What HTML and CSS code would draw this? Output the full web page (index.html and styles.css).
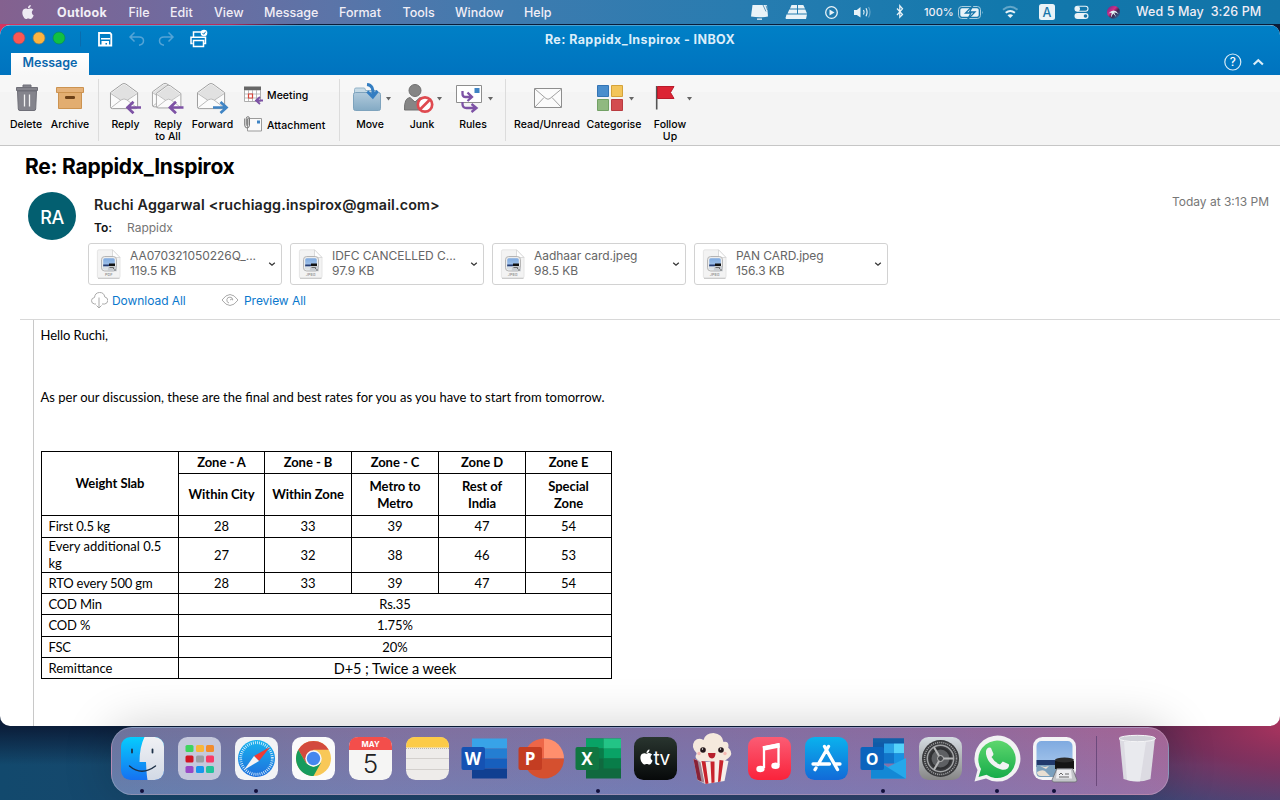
FILE: index.html
```html
<!DOCTYPE html>
<html lang="en">
<head>
<meta charset="utf-8">
<title>Re: Rappidx_Inspirox - INBOX</title>
<link rel="stylesheet" href="styles.css">
</head>
<body>
<svg width="0" height="0" class="defs">
  <defs>
    <symbol id="apple" viewBox="0 0 24 24"><path d="M12.152 6.896c-.948 0-2.415-1.078-3.96-1.04-2.04.027-3.91 1.183-4.961 3.014-2.117 3.675-.546 9.103 1.519 12.09 1.013 1.454 2.208 3.09 3.792 3.039 1.52-.065 2.09-.987 3.935-.987 1.831 0 2.35.987 3.96.948 1.637-.026 2.676-1.48 3.676-2.948 1.156-1.688 1.636-3.325 1.662-3.415-.039-.013-3.182-1.221-3.22-4.857-.026-3.04 2.48-4.494 2.597-4.559-1.429-2.09-3.623-2.324-4.39-2.376-2-.156-3.675 1.09-4.61 1.09zM15.53 3.83c.843-1.012 1.4-2.427 1.245-3.83-1.207.052-2.662.805-3.532 1.818-.78.896-1.454 2.338-1.273 3.714 1.338.104 2.715-.688 3.559-1.701"/></symbol>
    <linearGradient id="sea" x1="0" y1="0" x2="0" y2="1"><stop offset="0" stop-color="#7faae0"/><stop offset="1" stop-color="#b4d0ef"/></linearGradient>
    <symbol id="open-env" viewBox="0 0 32 32">
      <path d="M1 12 13 3.2Q15 2 17 3.2L29 12V26.500Q29 28.500 27 28.500H3Q1 28.500 1 26.500Z" fill="#fbfbfb" stroke="#9a9a9a" stroke-width="1"/>
      <path d="M2 12.500 13.300 4.200Q15 3 16.700 4.200L28 12.500 18.500 19.500Q15 17.300 11.500 19.500Z" fill="#e1e1e1"/>
      <path d="M1.500 13 11.500 19.800M28.500 13 18.500 19.800M1.800 27.500 12 19.500Q15 17.500 18 19.500L28.200 27.500" fill="none" stroke="#b0b0b0" stroke-width=".9"/>
    </symbol>
    <symbol id="arrow-left" viewBox="0 0 16 14"><path d="M15.500 7H3M8 1.300 2 7l6 5.700" fill="none" stroke="#7d52a5" stroke-width="2.700"/></symbol>
    <symbol id="file" viewBox="0 0 26 30">
      <path d="M3 .8H16.500L24 8.500V27.500Q24 29.200 22.400 29.200H3Q1.400 29.200 1.400 27.500V2.400Q1.400.8 3 .8Z" fill="#f3f3f3" stroke="#e0e0e0" stroke-width=".8"/>
      <path d="M2 29.300H23.500" stroke="#c4c4c4" stroke-width="1"/>
      <path d="M16.500.8V7Q16.500 8.500 18 8.500H24Z" fill="#fff" stroke="#d3d3d3" stroke-width=".8"/>
      <rect x="5.500" y="7.500" width="15" height="14.500" rx="3.200" fill="#ededed" stroke="#b5b5b5"/>
      <rect x="7.200" y="9.200" width="11.600" height="11" rx="1.500" fill="url(#sea)"/>
      <path d="M7.200 15.500h11.600v2H7.200z" fill="#263c72"/><path d="M7.200 17.500h11.600v2.700H7.200z" fill="#dce1e5"/>
      <path d="M13 14.500h6v2.500h-6z" fill="#111"/><path d="M12.500 17h7.500l1 5.200h-9.500z" fill="#c7cbd0"/><path d="M13.500 18.500h4v1.500M18 21h2" stroke="#555" fill="none" stroke-width=".8"/>
    </symbol>
    <symbol id="chev" viewBox="0 0 8 6"><path d="M1.200 1.700 4 4.300 6.800 1.700" fill="none" stroke="#333" stroke-width="1.200"/></symbol>
  </defs>
</svg>

<header class="menubar">
  <nav class="menus">
    <span class="apple"><svg width="14" height="16"><use href="#apple" width="14" height="16" fill="#eeeaf3"/></svg></span>
    <b class="m-app">Outlook</b><span>File</span><span>Edit</span><span>View</span><span>Message</span><span>Format</span><span>Tools</span><span>Window</span><span>Help</span>
  </nav>
  <div class="status">
    <svg viewBox="740 0 40 24"><path d="M752.500 5H767L768 16.500Q760 18 751 16.500Z" fill="#e9f3f8"/><path d="M763 5 766 11.500M766 5.500 767.500 10" stroke="#377ea8" stroke-width=".8"/><path d="M757 18.500h5v1.300h-5z" fill="#e9f3f8"/></svg>
    <svg viewBox="780 0 35 24" fill="#e9f3f8"><path d="M791.500 5H797v3.500H790zM798 5H803.300L805 8.500H798zM789.300 9.500H797v4H787.500zM798 9.500H805.300L807 13.500H798zM786.500 14.500H807L806 19H786L785.500 18z"/></svg>
    <svg viewBox="815 0 35 24"><circle cx="831.500" cy="12.500" r="5.800" fill="none" stroke="#e9f3f8" stroke-width="1.300"/><path d="M829.500 9.500v6l5-3z" fill="#e9f3f8"/></svg>
    <svg viewBox="850 0 35 24"><path d="M855 10h2.800L861.500 7v10.500L857.800 15H855Z" fill="#e9f3f8" transform="translate(-1)"/><path d="M863.500 10q1.300 2.300 0 4.500M866 8.300q2.200 4 0 8" fill="none" stroke="#e9f3f8" stroke-width="1.200"/><path d="M868.500 7q3 5 0 10.500" fill="none" stroke="#65a5c9" stroke-width="1.200"/></svg>
    <svg viewBox="885 0 30 24"><path d="M891.500 8.200 897 14.200 894.300 17V5.300L897 8.500 891.500 14.700" fill="none" stroke="#e9f3f8" stroke-width="1.250" transform="translate(5.500 .3)"/></svg>
    <span class="pct">100%</span>
    <svg viewBox="953 0 37 24"><rect x="958.500" y="6.500" width="22" height="12" rx="3.200" fill="none" stroke="#a8cde0"/><rect x="960.300" y="8.200" width="18.400" height="8.600" rx="1.700" fill="#e9f3f8"/><path d="M973 5.500 965.500 13H971L967.500 19.500 975 12H969.500Z" fill="#e9f3f8" stroke="#1776a9" stroke-width="1.300"/><path d="M982 10.700q1.300 1.500 0 3.500z" fill="#a8cde0"/></svg>
    <svg viewBox="990 0 40 24"><path d="M1003.500 9.800q7.250-6 14.500 0" fill="none" stroke="#62a7ca" stroke-width="1.900" transform="translate(-.5)"/><path d="M1005.700 12.800q4.600-3.600 9.200 0" fill="none" stroke="#e9f3f8" stroke-width="2"/><path d="M1007.500 15.200q2.800-2 5.600 0L1010.300 18z" fill="#e9f3f8"/></svg>
    <svg viewBox="1030 0 32 24"><rect x="1039" y="4" width="16" height="16" rx="2.500" fill="#e9f3f8"/><text x="1047" y="16.700" text-anchor="middle" font-size="12.500" fill="#1776a9" class="svgt">A</text></svg>
    <svg viewBox="1062 0 36 24"><rect x="1075" y="6.300" width="13" height="5" rx="2.500" fill="none" stroke="#e9f3f8" stroke-width="1.100"/><circle cx="1077.500" cy="8.800" r="2.500" fill="#e9f3f8"/><rect x="1074.500" y="13" width="14" height="6" rx="3" fill="#e9f3f8"/><circle cx="1085.500" cy="16" r="1.800" fill="#1776a9"/></svg>
    <svg viewBox="1098 0 32 24"><defs><linearGradient id="siri" x1="0" y1="0" x2="1" y2="1"><stop offset="0" stop-color="#5a2a8a"/><stop offset=".4" stop-color="#d02e86"/><stop offset=".6" stop-color="#3c2550"/><stop offset="1" stop-color="#2b83b5"/></linearGradient></defs><circle cx="1113.500" cy="12.200" r="6.500" fill="url(#siri)"/><path d="M1108.500 13.500q5.500-6 10 .5-3-2-4.300-1.500l2 4.500-3-3.500-2.500 4.500 1-5q-1-.5-3.200.5z" fill="#dff3f5"/></svg>
    <span class="date">Wed 5 May&nbsp; 3:26 PM</span>
  </div>
</header>

<main class="window">
  <div class="titlebar">
    <div class="quick">
      <svg viewBox="0 25 220 27" width="220" height="27">
        <g stroke-width=".7"><circle cx="19" cy="38" r="6" fill="#fc5753" stroke="#8f5069"/><circle cx="39" cy="38" r="6" fill="#fdb440" stroke="#8c7f55"/><circle cx="59" cy="38" r="6" fill="#11c044" stroke="#0c8a55"/></g>
        <path d="M80.500 31.500v15" stroke="#0a6cad"/>
        <path d="M99 33h11l1.300 1.300V45.500H99z" fill="none" stroke="#fff" stroke-width="1.800"/><path d="M101 38.800h9" stroke="#fff" stroke-width="1.500"/><path d="M101.500 45.500v-4.500h7.500v4.500h-2v-2.500h-1.500v2.500z" fill="#fff"/>
        <g fill="none" stroke="#54a4d6" stroke-width="1.500"><path d="M134.500 32.500 130 37l4.500 4.500M130.300 37H139q4.500 0 4.500 3.800T139 45.300"/><path d="M168.500 32.500 173 37l-4.500 4.500M172.700 37H164q-4.500 0-4.500 3.800t4.500 4.500"/></g>
        <path d="M193.500 36.500V32h7.500M192.500 43.500H191V37.200H205.500V43.500H204M193.500 40.500H203.500V46.500H193.500Z" fill="none" stroke="#fff" stroke-width="1.500"/><circle cx="204" cy="33" r="3.300" fill="#fff"/><path d="m202.500 33 1.200 1.300 2-2.600" stroke="#0878be" fill="none"/>
      </svg>
      <span class="wintitle">Re: Rappidx_Inspirox - INBOX</span>
    </div>
    <div class="tabs">
      <span class="tab">Message</span>
      <svg viewBox="1220 52 50 22" width="50" height="22"><circle cx="1232.800" cy="62" r="8" fill="none" stroke="#d5eaf6" stroke-width="1.200"/><text x="1232.800" y="66.200" text-anchor="middle" font-size="11.500" fill="#fff" class="svgt">?</text><path d="m1253.700 64.500 4.600-4.200 4.600 4.200" fill="none" stroke="#d9ecf7" stroke-width="2.200"/></svg>
    </div>
  </div>

  <div class="ribbon">
    <div class="btn"><svg viewBox="4 78 44 40"><path d="M17.500 91H36.500L35.700 109Q35.600 110.500 34 110.500H20Q18.400 110.500 18.300 109Z" fill="#84848c" stroke="#6f6f78"/><path d="M16.500 87.500h21v3h-21zM23 87.500v-2.500h8v2.500" fill="#84848c" stroke="#6f6f78"/><path d="M24.500 94.500v12M29.500 94.500v12" stroke="#f2f2f2" stroke-width="1.300"/></svg><span>Delete</span></div>
    <div class="btn"><svg viewBox="48 78 44 40"><path d="M58.500 92.500H81.500V108.500H58.500Z" fill="#e2ad70" stroke="#cc9350"/><path d="M56.500 87.500h27v5h-27z" fill="#e5b27a" stroke="#cc9350"/><rect x="65" y="96" width="10" height="3" rx="1.300" fill="#6d4017"/></svg><span>Archive</span></div>
    <i class="sep"></i>
    <div class="btn"><svg viewBox="104 78 43 40"><use href="#open-env" x="109.500" y="81" width="31" height="31"/><use href="#arrow-left" x="125.500" y="100.500" width="16" height="14"/></svg><span>Reply</span></div>
    <div class="btn"><svg viewBox="147 78 42 40"><use href="#open-env" x="151.500" y="81" width="29" height="29"/><use href="#open-env" x="155.500" y="83" width="28" height="28"/><use href="#arrow-left" x="168" y="100.500" width="16" height="14"/></svg><span>Reply<br>to All</span></div>
    <div class="btn"><svg viewBox="189 78 47 40"><use href="#open-env" x="196.500" y="81" width="31" height="31"/><path d="M213 107.500h12.500M220.500 102l6 5.500-6 5.500" fill="none" stroke="#3f84c4" stroke-width="2.700"/></svg><span>Forward</span></div>
    <div class="stack">
      <div class="row"><svg viewBox="243 85 22 21" width="22" height="21"><path d="M244.500 90h16v11.500h-16z" fill="#fff" stroke="#999" stroke-width=".8"/><path d="M248.500 90v11.500M252.500 90v11.500M256.500 90v11.500M244.500 94h16M244.500 98h16" stroke="#aaa" stroke-width=".8"/><path d="M244 86.500h17V90h-17z" fill="#666"/><path d="M248.500 94h4v4h-4z" fill="#fff" stroke="#d5443a" stroke-width="1.200"/><path d="M263 100.500h-7M260 97l-4 3.500 4 3.500" fill="none" stroke="#7d52a5" stroke-width="1.800"/></svg><span>Meeting</span></div>
      <div class="row"><svg viewBox="243 114 22 21" width="22" height="21"><path d="M247.500 118.500h14v12.500h-14z" fill="#fafafa" stroke="#9b9b9b"/><path d="M257 120.500h3v3h-3z" fill="#3f84c4"/><path d="M244.700 118.500v6.500q.2 3 2.400 3t2.400-3v-6.500q0-1.800-1.600-1.800t-1.600 1.800v6q0 1 .8 1t.8-1v-5.500" fill="none" stroke="#777" stroke-width="1"/></svg><span>Attachment</span></div>
    </div>
    <i class="sep"></i>
    <div class="btn"><svg viewBox="345 78 50 40"><defs><linearGradient id="fold" x1="0" y1="0" x2="0" y2="1"><stop offset="0" stop-color="#b1cadc"/><stop offset="1" stop-color="#83aac4"/></linearGradient></defs><path d="M354.500 93V89.500Q354.500 88 356 88H364Q365.500 88 365.500 90.500H377V95H354.500Z" fill="#c6dae6" stroke="#93b3c8"/><rect x="353.500" y="92.500" width="27" height="18" rx="2" fill="url(#fold)" stroke="#7ea3bd"/><path d="M367 84.500q7 .5 6 11M367.300 91.500l5.500 5.500 4.800-6" fill="none" stroke="#347ec2" stroke-width="3"/><path d="M386 97h5l-2.500 3.500z" fill="#666"/></svg><span>Move</span></div>
    <div class="btn"><svg viewBox="395 78 54 40"><circle cx="415" cy="90.500" r="6" fill="#858585" stroke="#707070"/><path d="M404.500 110Q404 98 410 97.500l5 4.500 5-4.500q4 1 5 6V110Z" fill="#858585" stroke="#707070"/><circle cx="425" cy="104.500" r="7.200" fill="#fff" stroke="#df4a50" stroke-width="2.700"/><path d="m420 109.500 10-10" stroke="#df4a50" stroke-width="2.700"/><path d="M437 97h5l-2.500 3.500z" fill="#666"/></svg><span>Junk</span></div>
    <div class="btn"><svg viewBox="449 78 48 40"><path d="M456.500 85.500h25V102.500h-25z" fill="#fff" stroke="#8e8e8e"/><path d="M474.500 88h5v5h-5z" fill="#3f84c4"/><path d="M462.500 91v3q0 3 3 3h5M462.500 102v2q0 4 4 4h9M467.500 92.500l4.500 4.500-4.500 4M471.500 104l5 4-5 4" fill="none" stroke="#7d52a5" stroke-width="2.300"/><path d="M488 97h5l-2.500 3.500z" fill="#666"/></svg><span>Rules</span></div>
    <i class="sep"></i>
    <div class="btn"><svg viewBox="513 78 68 40"><path d="M534.500 88.500h27v19h-27z" fill="#fbfbfb" stroke="#8e8e8e"/><path d="m535 89 11 9.500q2 1.500 4 0L561.500 89M535 107l9-9.500M561 107l-9-9.500" fill="none" stroke="#a2a2a2"/></svg><span>Read/Unread</span></div>
    <div class="btn"><svg viewBox="581 78 66 40"><path d="M597.500 85.500h11v11h-11z" fill="#4a8ecd" stroke="#3474b4"/><path d="M611.500 85.500h11v11h-11z" fill="#f3c55b" stroke="#d5a33a"/><path d="M597.500 99.500h11v11h-11z" fill="#90b980" stroke="#72a165"/><path d="M611.500 99.500h11v11h-11z" fill="#d34c50" stroke="#b93b40"/><path d="M629 97h5l-2.500 3.500z" fill="#666"/></svg><span>Categorise</span></div>
    <div class="btn"><svg viewBox="647 78 46 40"><path d="M656.700 86v23.500" stroke="#555" stroke-width="1.600"/><path d="M657.500 86.500H674L670.500 92.500 674 98.500H657.500Z" fill="#dc2434" stroke="#b91b2b"/><path d="M687 97h5l-2.500 3.500z" fill="#666"/></svg><span>Follow<br>Up</span></div>
  </div>

  <section class="head">
    <h1>Re: Rappidx_Inspirox</h1>
    <div class="sender">
      <div class="avatar">RA</div>
      <div class="who">
        <div class="from"><strong>Ruchi Aggarwal &lt;ruchiagg.inspirox@gmail.com&gt;</strong><time>Today at 3:13 PM</time></div>
        <div class="to"><b>To:</b><span>Rappidx</span></div>
      </div>
    </div>
    <div class="files">
      <div class="file"><svg class="fi" viewBox="0 0 26 30"><use href="#file" width="26" height="30"/><text x="12.700" y="27.300" class="ext">PDF</text></svg><div class="meta"><span>AA070321050226Q_...</span><span>119.5 KB</span></div><svg class="cv"><use href="#chev" width="8" height="6"/></svg></div>
      <div class="file"><svg class="fi" viewBox="0 0 26 30"><use href="#file" width="26" height="30"/><text x="12.700" y="27.300" class="ext">JPEG</text></svg><div class="meta"><span>IDFC CANCELLED C...</span><span>97.9 KB</span></div><svg class="cv"><use href="#chev" width="8" height="6"/></svg></div>
      <div class="file"><svg class="fi" viewBox="0 0 26 30"><use href="#file" width="26" height="30"/><text x="12.700" y="27.300" class="ext">JPEG</text></svg><div class="meta"><span>Aadhaar card.jpeg</span><span>98.5 KB</span></div><svg class="cv"><use href="#chev" width="8" height="6"/></svg></div>
      <div class="file"><svg class="fi" viewBox="0 0 26 30"><use href="#file" width="26" height="30"/><text x="12.700" y="27.300" class="ext">JPEG</text></svg><div class="meta"><span>PAN CARD.jpeg</span><span>156.3 KB</span></div><svg class="cv"><use href="#chev" width="8" height="6"/></svg></div>
    </div>
    <div class="actions">
      <a class="dl"><svg viewBox="90 291 18 18" width="18" height="18" fill="none" stroke="#aaa"><path d="M96 304h-1.500q-3-.5-3-3.300 0-2.700 3-3.200.5-4.800 5-5t5.300 4.500q3 .5 3 3.500-.3 3-3 3.500H102M99 297.500v10M96.500 305.500l2.500 2.500 2.500-2.500"/></svg>Download All</a>
      <a><svg viewBox="221 291 18 18" width="18" height="18" fill="none" stroke="#aaa"><path d="M222 300q8-11 16 0-8 11-16 0z"/><path d="M229 303a3 3 0 1 1 3.800-3q-1.500-1.500-2.800 0"/></svg>Preview All</a>
    </div>
  </section>

  <article class="mail">
    <p class="hello">Hello Ruchi,</p>
    <p class="intro">As per our discussion, these are the final and best rates for you as you have to start from tomorrow.</p>
    <table>
      <colgroup><col class="c0"><col class="c1"><col class="c2"><col class="c3"><col class="c4"><col class="c5"></colgroup>
      <tr class="h22"><th rowspan="2">Weight Slab</th><th>Zone - A</th><th>Zone - B</th><th>Zone - C</th><th>Zone D</th><th>Zone E</th></tr>
      <tr class="h42"><th>Within City</th><th>Within Zone</th><th>Metro to<br>Metro</th><th>Rest of<br>India</th><th>Special<br>Zone</th></tr>
      <tr class="h22"><td>First 0.5 kg</td><td>28</td><td>33</td><td>39</td><td>47</td><td>54</td></tr>
      <tr class="h35"><td class="wide">Every additional 0.5<br>kg</td><td>27</td><td>32</td><td>38</td><td>46</td><td>53</td></tr>
      <tr class="h21"><td>RTO every 500 gm</td><td>28</td><td>33</td><td>39</td><td>47</td><td>54</td></tr>
      <tr class="h21"><td>COD Min</td><td colspan="5">Rs.35</td></tr>
      <tr class="h22"><td>COD %</td><td colspan="5">1.75%</td></tr>
      <tr class="h21"><td>FSC</td><td colspan="5">20%</td></tr>
      <tr class="h21"><td class="wide">Remittance</td><td colspan="5" class="big">D+5 ; Twice a week</td></tr>
    </table>
  </article>
</main>

<footer class="dockarea">
  <div class="dock">
    <svg viewBox="0 0 57 68"><defs><linearGradient id="fb" x1="0" y1="0" x2="0" y2="1"><stop offset="0" stop-color="#06cdfd"/><stop offset="1" stop-color="#1671f1"/></linearGradient><linearGradient id="fw" x1="0" y1="0" x2="0" y2="1"><stop offset="0" stop-color="#f0f1f5"/><stop offset="1" stop-color="#d2d9e5"/></linearGradient><clipPath id="rr"><rect x="7" y="10" width="43" height="43" rx="9.500"/></clipPath></defs><g clip-path="url(#rr)"><path d="M7 10h43v43H7z" fill="url(#fb)"/><path d="M30.500 10H50V53H33.500Q32.500 48 32 35H25.500Q25.500 20 30.500 10Z" fill="url(#fw)"/></g><path d="M18 22.500v3M38.500 22.500v3" stroke="#1c3048" stroke-width="1.800" stroke-linecap="round"/><path d="M15.500 39q12 10.500 26 0" fill="none" stroke="#1c2f46" stroke-width="1.400" stroke-linecap="round"/><circle cx="28" cy="64" r="2" class="dot"/></svg>
    <svg viewBox="0 0 57 68"><rect x="7" y="10" width="43" height="43" rx="9.500" fill="#c5c8dc"/><g><rect x="14.500" y="18" width="8" height="7" rx="1.500" fill="#3ed45f"/><rect x="25" y="18" width="8" height="7" rx="1.500" fill="#f8b63a"/><rect x="35" y="18" width="8" height="7" rx="1.500" fill="#f28b2c"/><rect x="14.500" y="28.500" width="8" height="7" rx="1.500" fill="#d21525"/><rect x="25" y="28.500" width="8" height="7" rx="1.500" fill="#9a9da2"/><rect x="35" y="28.500" width="8" height="7" rx="1.500" fill="#f93967"/><rect x="14.500" y="39" width="8" height="7" rx="1.500" fill="#9848c6"/><rect x="25" y="39" width="8" height="7" rx="1.500" fill="#1696ed"/><rect x="35" y="39" width="8" height="7" rx="1.500" fill="#22c39b"/></g></svg>
    <svg viewBox="0 0 57 68"><defs><linearGradient id="sf" x1="0" y1="0" x2="0" y2="1"><stop offset="0" stop-color="#18b3ee"/><stop offset="1" stop-color="#1e6fdd"/></linearGradient></defs><rect x="7" y="10" width="43" height="43" rx="9.500" fill="#f2f3f5"/><circle cx="28.500" cy="31.500" r="18.500" fill="url(#sf)"/><circle cx="28.500" cy="31.500" r="15.800" fill="none" stroke="#e4f4fc" stroke-width="2.800" stroke-dasharray=".8 1.270"/><path d="M42 20 31 34 26 29Z" fill="#f03b35"/><path d="M26 29 31 34 16 43Z" fill="#f3f3f5"/><circle cx="28" cy="64" r="2" class="dot"/></svg>
    <svg viewBox="0 0 57 68"><rect x="7" y="10" width="43" height="43" rx="9.500" fill="#fafafa"/><circle cx="28.500" cy="31.500" r="17.500" fill="#f8c857"/><path d="M13.300 22.800A17.500 17.500 0 0 1 43.700 22.800H28.500L21 36Z" fill="#d34a3d"/><path d="M13.300 22.800 21 36 28.500 40 36 35.800 28.500 49A17.500 17.500 0 0 1 13.300 22.800Z" fill="#169b5d"/><circle cx="28.500" cy="31.500" r="8.200" fill="#f5f7fa"/><circle cx="28.500" cy="31.500" r="6.700" fill="#4587ef"/></svg>
    <svg viewBox="0 0 57 68"><rect x="7" y="10" width="43" height="43" rx="9.500" fill="#f5f5f4"/><path d="M7 23V19.500Q7 10 16.500 10H40.500Q50 10 50 19.500V23Z" fill="#f34e4b"/><text x="28.500" y="19.900" text-anchor="middle" font-size="7.800" font-weight="700" fill="#fff" class="svgt">MAY</text><text x="28.500" y="45.500" text-anchor="middle" font-size="26" font-weight="300" fill="#222" class="svgt">5</text></svg>
    <svg viewBox="0 0 57 68"><rect x="7" y="10" width="43" height="43" rx="9.500" fill="#eeecea"/><path d="M7 20.500V19.500Q7 10 16.500 10H40.500Q50 10 50 19.500V20.500Z" fill="#fccb48"/><path d="M7 21.500h43" stroke="#bcb7ae" stroke-dasharray="1 1"/><path d="M7 31.500h43M7 42.500h43" stroke="#ccc9c5" stroke-width=".8"/></svg>
    <svg viewBox="0 0 57 68"><path d="M16 11.500h35v10H16z" fill="#38a3e8"/><path d="M16 21.500h35v10H16z" fill="#247ed2"/><path d="M16 31.500h35v10H16z" fill="#175fbd"/><path d="M16 41.500h35v10H16z" fill="#103f91"/><rect x="5.500" y="20" width="23.500" height="23" rx="2" fill="#1552b3"/><text x="17" y="37.700" text-anchor="middle" font-size="17" font-weight="700" fill="#fff" class="off">W</text></svg>
    <svg viewBox="0 0 57 68"><path d="M31 11.500a20 20 0 0 1 20 20h-20z" fill="#ff8f6d"/><path d="M31 11.500a20 20 0 0 0-20 20h20z" fill="#ed6648"/><path d="M11 31.500a20 20 0 0 0 40 0z" fill="#d5502f"/><rect x="5.500" y="20" width="23.500" height="23" rx="2" fill="#c43d22"/><text x="17" y="37.700" text-anchor="middle" font-size="17" font-weight="700" fill="#fff" class="off">P</text></svg>
    <svg viewBox="0 0 57 68"><path d="M16 11.500h35v40H16z" fill="#10693f"/><path d="M16 11.500h17.500v10H16zM33.500 21.500H51v10H33.500z" fill="#09a366"/><path d="M33.500 11.500H51v10H33.500z" fill="#23c486"/><path d="M16 21.500h17.500v10H16zM33.500 31.500H51v10H33.500z" fill="#087d49"/><rect x="5.500" y="20" width="23.500" height="23" rx="2" fill="#107641"/><text x="17" y="37.700" text-anchor="middle" font-size="17" font-weight="700" fill="#fff" class="off">X</text><circle cx="28" cy="64" r="2" class="dot"/></svg>
    <svg viewBox="0 0 57 68"><defs><linearGradient id="tv" x1="0" y1="0" x2="0" y2="1"><stop offset="0" stop-color="#29352f"/><stop offset="1" stop-color="#07090a"/></linearGradient></defs><rect x="7" y="10" width="43" height="43" rx="9.500" fill="url(#tv)"/><use href="#apple" x="12" y="22" width="15" height="16" fill="#fff"/><text x="26.500" y="38" font-size="19" fill="#fff" class="svgt tv">tv</text></svg>
    <svg viewBox="0 0 57 68"><g transform="translate(1.500 1)"><path d="M11 25Q5 19 9 13q4-4 9-1 2-7 10-7 9 1 10 9 5-1 5 4-1 2 1 3 4 5-1 9l-4 3H14q-6-3-3-7Z" fill="#f5e9dd"/><path d="M8 31q10 4 18.500 2Q34 31 43 33L39 53 20 56 12 52Z" fill="#f6eee9"/><path d="M8 31l4 1.500 4 21-4-2zM16 33l4 .5 3 22-3 .5zM25 33.500h4l0 21-3 .5zM34 32l4 .5-3 21-2.500.5z" fill="#c8232c"/><path d="m8 31 7 3 4 21-7-3z" fill="#45203f" opacity=".5"/><circle cx="17.500" cy="22" r="2.800" fill="#25181b"/><circle cx="35.500" cy="22" r="2.800" fill="#25181b"/><circle cx="17" cy="21" r=".7" fill="#fff"/><circle cx="35" cy="21" r=".7" fill="#fff"/><path d="M22.500 25h7.500q0 5-3.500 5.500-4-.5-4-5.500z" fill="#b61f2c"/><circle cx="13.500" cy="25.500" r="1.700" fill="#f6b9b2"/><circle cx="39.500" cy="25.500" r="1.700" fill="#f6b9b2"/></g></svg>
    <svg viewBox="0 0 57 68"><defs><linearGradient id="mu" x1="0" y1="0" x2="0" y2="1"><stop offset="0" stop-color="#fb5c74"/><stop offset="1" stop-color="#fa233b"/></linearGradient></defs><rect x="7" y="10" width="43" height="43" rx="9.500" fill="url(#mu)"/><path d="M23 41V20.500L37.500 17.500V38" fill="none" stroke="#fff" stroke-width="2.300"/><path d="M22 21.500 38.500 18.200" stroke="#fff" stroke-width="4.500"/><ellipse cx="19.500" cy="42" rx="4.200" ry="3.200" fill="#fff"/><ellipse cx="34.500" cy="38.700" rx="4.200" ry="3.200" fill="#fff"/></svg>
    <svg viewBox="0 0 57 68"><defs><linearGradient id="as" x1="0" y1="0" x2="0" y2="1"><stop offset="0" stop-color="#0ab2ed"/><stop offset="1" stop-color="#126ad8"/></linearGradient></defs><rect x="7" y="10" width="43" height="43" rx="9.500" fill="url(#as)"/><g fill="none" stroke="#fff" stroke-width="3.300" stroke-linecap="round"><path d="M26.500 19.500 39.500 42.500M30.500 19.500 20 37.500M15 37h16.500M37.500 37H42M18 41l-1 1.700"/></g></svg>
    <svg viewBox="0 0 57 68"><path d="M18 11.500h31v22H18z" fill="#0f5ba8"/><path d="M18 11.500h31v4H18z" fill="#1260a8"/><path d="M29 16.500h10v10H29z" fill="#2ba3e6"/><path d="M39 16.500h10v10H39z" fill="#55d3fa"/><path d="M29 26.500h10v10H29z" fill="#1175ca"/><path d="M39 26.500h10v10H39z" fill="#1992e2"/><path d="M16 30 33 40 51 31V51.500H16Z" fill="#25a8ea"/><path d="M16 30 50.500 51.500H16z" fill="#1388d5"/><rect x="5.500" y="20" width="23.500" height="23" rx="2" fill="#0b64bd"/><text x="17" y="37.500" text-anchor="middle" font-size="16" font-weight="700" fill="#fff" class="off">O</text><circle cx="28" cy="64" r="2" class="dot"/></svg>
    <svg viewBox="0 0 57 68"><defs><linearGradient id="st" x1="0" y1="0" x2="0" y2="1"><stop offset="0" stop-color="#d5dce2"/><stop offset="1" stop-color="#868686"/></linearGradient></defs><rect x="7" y="10" width="43" height="43" rx="9.500" fill="url(#st)"/><circle cx="28.500" cy="31.500" r="18.500" fill="#38393c"/><circle cx="28.500" cy="31.500" r="16" fill="none" stroke="#98999b" stroke-width="1.600" stroke-dasharray="1.200 .9"/><circle cx="28.500" cy="31.500" r="13.200" fill="#3b3c3f" stroke="#a2a4a6" stroke-width="1.500"/><circle cx="28.500" cy="31.500" r="10" fill="#5e6063" stroke="#2f3032" stroke-width="2"/><path d="M28.500 31.500h13M28.500 31.500 22 20.200M28.500 31.500 22 42.800" stroke="#b6b7b8" stroke-width="2"/><circle cx="28.500" cy="31.500" r="3" fill="#46484b" stroke="#bbb"/></svg>
    <svg viewBox="0 0 57 68"><defs><linearGradient id="wa" x1="0" y1="0" x2="0" y2="1"><stop offset="0" stop-color="#5dd66d"/><stop offset="1" stop-color="#17ac4a"/></linearGradient></defs><g transform="translate(-1)"><path d="M6.500 54.500 9.500 43A23 23 0 1 1 18 51.500Z" fill="#f2f2f3"/><path d="M10.500 50 13 42A18.700 18.700 0 1 1 18.500 47.800Z" fill="url(#wa)"/><path d="M18 24q1-4 4-3.500l1 .5 2.500 6q0 1.500-2 3 3 5.500 8.500 7.500l2.800-3 6 2.800q.8 2-1.200 4.200-3 2.200-7 .8-12.500-4-14.600-15.300z" fill="#f2f2f3"/></g><circle cx="28" cy="64" r="2" class="dot"/></svg>
    <svg viewBox="0 0 57 68"><rect x="7" y="10" width="43" height="43" rx="9.500" fill="#f4f4f6"/><rect x="10.500" y="14" width="36" height="36" rx="5" fill="url(#sea)"/><path d="M10.500 33h36v7h-36z" fill="#20396d"/><path d="M10.500 38h36v8q0 4-4 4h-28q-4 0-4-4z" fill="#7a9fbd"/><path d="M11 45q5-3 8-1l5 5H15q-4 0-4-4zM14 39l5 1 4-1-3 3z" fill="#e9dfd2"/><path d="M29 34h19v8H29z" fill="#151515"/><ellipse cx="38.500" cy="33" rx="9.500" ry="2.500" fill="#2b2b2b"/><path d="M31 41.500h15.500L51 53q0 2-2 2H28q-2 0-2-2z" fill="#c3c5c9" stroke="#6b6c72" stroke-width=".8"/><path d="M31 43h14l1 8.500H30z" fill="#ededf0"/><path d="M33 48l2-2 2 2M39 47h4M33 50h10" stroke="#444" stroke-width=".8" fill="none"/><circle cx="28" cy="64" r="2" class="dot"/></svg>
    <i class="dsep"></i>
    <svg viewBox="0 0 57 68"><path d="M10.500 11 14.500 52Q28.500 57 41.500 52L46 11Z" fill="#dedfe4" opacity=".97"/><path d="M15 15 18 53Q24 54.500 31 54.500L37 15Z" fill="#f2f3f6" opacity=".6"/><ellipse cx="28.300" cy="11.500" rx="18.300" ry="3.200" fill="#d0d1d8" stroke="#f5f5f7"/></svg>
  </div>
</footer>
</body>
</html>
```
FILE: styles.css
```css
* { box-sizing: border-box; }
body {
  margin: 0; width: 1280px; height: 800px; overflow: hidden;
  display: flex; flex-direction: column;
  font-family: Inter, "Liberation Sans", sans-serif; color: #000;
  background:
    linear-gradient(90deg, #d5335f 0 20px, #b92c5c 230px, transparent 300px) 0 0 / 100% 60px no-repeat,
    radial-gradient(ellipse 260px 95px at 1300px 725px, #b03560 0, rgba(140,45,90,.8) 45%, transparent 100%),
    linear-gradient(180deg, #0b1c38 0, #0b1c38 725px, transparent 765px),
    linear-gradient(90deg, #12496d, #2c436c 60%, #3f4a7c);
}
svg { display: block; flex: none; }
.defs { position: absolute; }
.svgt { font-family: Inter, sans-serif; font-weight: 500; }
svg .svgt[font-weight="700"] { font-weight: 700; }
svg .svgt[font-weight="300"] { font-weight: 300; }
.off { font-family: "Open Sans", sans-serif; }
svg .tv { letter-spacing: -.5px; font-weight: 400; }

/* system menu bar */
.menubar {
  height: 24px; flex: none; display: flex; justify-content: space-between;
  background: linear-gradient(90deg, #84618f 0, #6f6b9f 180px, #5b74a8 330px, #3f7baf 500px, #267cb0 760px, #1278ac 1000px, #1274a8);
  color: #f1eef6; font-size: 12.5px; font-weight: 500; line-height: 25px;
}
.menus { display: grid; grid-template-columns: 57px 71.5px 41.500px 44px 50px 75px 63.500px 52.500px 69px 50px; white-space: nowrap; }
.apple { padding: 4px 0 0 21px; }
.m-app { font-weight: 700; letter-spacing: .3px; }
.status { display: grid; grid-template-columns: 40px 35px 35px 35px 30px 38px 37px 40px 32px 36px 32px 150px; white-space: nowrap; }
.status svg { width: 100%; height: 24px; }
.pct { padding-left: 9px; font-size: 11px; }
.date { padding-left: 6px; letter-spacing: .1px; line-height: 24px; }

/* mail window */
.window {
  height: 701px; flex: none; margin-top: 1px; overflow: hidden; background: #fff;
  border-radius: 10px; display: flex; flex-direction: column;
}
.titlebar { height: 50px; flex: none; background: linear-gradient(#0080c6, #0073bf); border-top: 1px solid #4ba3d3; }
.quick { display: grid; grid-template-columns: 220px 840px 220px; height: 26px; align-items: start; }
.quick svg { margin-top: -1px; }
.wintitle { text-align: center; color: #dceefa; font-weight: 700; font-size: 12.5px; letter-spacing: .4px; line-height: 28px; }
.tabs { display: flex; justify-content: space-between; padding: 0 10px 0 11px; height: 23px; }
.tab { width: 78px; margin-top: 1px; background: linear-gradient(#fff, #f7f7f7); color: #0b68ad; font-size: 12.5px; font-weight: 600; text-align: center; line-height: 20px; }
.ribbon {
  height: 71px; flex: none; display: grid; padding-left: 4px;
  grid-template-columns: 44px 44px 12px 43px 42px 47px 97px 12px 50px 54px 48px 16px 68px 66px 46px;
  background: linear-gradient(#f7f7f7 0 17px, #f4f4f4 17px); border-bottom: 1px solid #c6c6c6;
  font-size: 10.5px; font-weight: 450; line-height: 12px;
}
.btn { display: flex; flex-direction: column; align-items: center; text-align: center; white-space: nowrap; }
.btn svg { width: 100%; height: 40px; margin-top: 3px; overflow: visible; }
.btn span { margin-top: 1px; }
.sep { width: 1px; height: 62px; margin: 4px auto 0; background: #dcdcdc; }
.stack { padding: 10px 0 0 7px; }
.row { display: flex; gap: 2px; height: 29px; }
.row span { line-height: 21px; letter-spacing: .05px; }
.row + .row span { line-height: 23px; }

/* message header */
.head { height: 173px; flex: none; padding-left: 20px; }
h1 { margin: 0 0 0 5px; font-size: 21px; font-weight: 650; line-height: 41px; letter-spacing: -.25px; height: 46px; }
.sender { display: flex; height: 51px; padding-left: 8px; }
.avatar { width: 48px; height: 48px; border-radius: 50%; background: #035f70; color: #fff; font-size: 18px; font-weight: 500; line-height: 51px; text-align: center; letter-spacing: -.5px; }
.who { flex: 1; padding: 0 11px 0 18px; }
.from { display: flex; justify-content: space-between; line-height: 26px; }
.from strong { font-size: 14.3px; font-weight: 600; color: #222; letter-spacing: .17px; }
time { font-size: 12px; color: #777; line-height: 20px; }
.to { display: flex; font-size: 12px; line-height: 19px; color: #757575; }
.to b { width: 33px; color: #111; font-weight: 600; }
.files { display: flex; gap: 8px; padding-left: 68px; }
.file { width: 194px; height: 42px; border: 1px solid #d2d2d2; border-radius: 3px; display: flex; align-items: center; padding: 0 5px 0 7px; }
.fi { width: 26px; height: 30px; }
.meta { display: flex; flex-direction: column; flex: 1; margin-left: 8px; font-size: 12px; line-height: 15px; color: #666; white-space: nowrap; margin-top: -3px; letter-spacing: -.05px; }
.cv { width: 8px; height: 6px; }
.ext { font: 600 3.800px Inter, sans-serif; fill: #999; text-anchor: middle; }
.actions { display: flex; padding: 6px 0 0 70px; color: #0a78cd; font-size: 12px; letter-spacing: -.05px; }
.actions a { display: flex; gap: 4px; line-height: 19px; width: 131px; }
.actions .dl + a { gap: 5px; }

/* message body */
.mail { flex: 1; margin-left: 20px; border-top: 1px solid #d8d8d8; font-family: Lato, "Open Sans", sans-serif; font-size: 13px; padding-left: 13px; }
.mail::before { content: ""; float: left; width: 1px; height: 406px; background: #c8c8c8; }
.mail p { margin: 0 0 0 7.500px; line-height: 17px; white-space: nowrap; }
.mail .hello { padding-top: 7px; letter-spacing: -.05px; }
.intro { padding: 45px 0 45px; }
table { border-collapse: collapse; table-layout: fixed; width: 571px; margin-left: 8px; line-height: 17px; }
td, th { border: 1px solid #000; padding: 0; text-align: center; white-space: nowrap; letter-spacing: -.05px; }
td:first-child { text-align: left; padding-left: 6.5px; letter-spacing: -.18px; }
td.wide:first-child { letter-spacing: 0; }
.c0 { width: 137px; } .c1 { width: 86px; } .c2, .c3, .c4 { width: 87px; } .c5 { width: 86px; }
.h22 { height: 22px; } .h42 { height: 42px; } .h35 { height: 35px; } .h21 { height: 21px; }
.big { font-size: 14.500px; }

/* dock */
.dockarea { padding: 1px 0 0 111px; }
.dock {
  width: 1058px; height: 68px; border-radius: 21px; border: 1px solid rgba(255,255,255,.22); padding-left: 2px; display: flex;
  background: linear-gradient(180deg, rgba(150,90,130,.25), rgba(110,140,200,.25)), linear-gradient(90deg, #607ba4, #7978a8 25%, #7677ad 50%, #8871a8 75%, #aa689b);
  box-shadow: 0 0 50px rgba(0,0,0,.2);
}
.dock svg { width: 57px; height: 68px; margin-top: -1px; }
.dsep { flex: none; width: 1px; height: 50px; margin: 8px 12px 0 13px; background: #6c4a7c; }
.dot { fill: #12103c; }
```
